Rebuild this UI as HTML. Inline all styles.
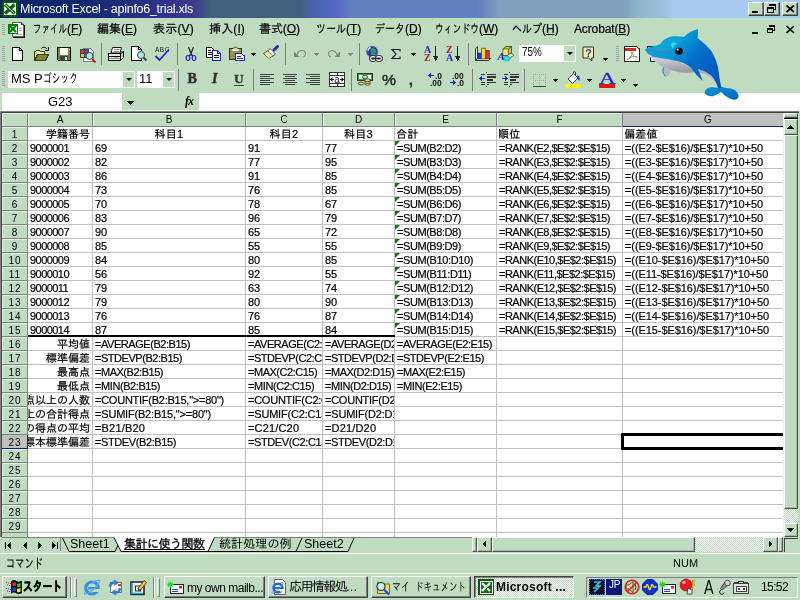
<!DOCTYPE html><html lang="ja"><head><meta charset="utf-8"><title>Microsoft Excel - apinfo6_trial.xls</title><style>
html,body{margin:0;padding:0;}
body{width:800px;height:600px;overflow:hidden;background:#c0dcc0;position:relative;will-change:transform;
 font-family:"Liberation Sans","IPAGothic",sans-serif;font-size:12px;color:#000;}
.a{position:absolute;}
.t{position:absolute;white-space:nowrap;line-height:1;}
.j{font-family:"Liberation Sans","IPAGothic",sans-serif;}
#title{left:0;top:0;width:800px;height:18px;background:linear-gradient(90deg,#0a246a 0,#0c2670 70px,#1c2c78 110px,#30348a 170px,#3c3c8c 196px,#406080 210px,#406080 300px,#4862b0 315px,#5866c4 335px,#6080c0 352px,#6080c0 478px,#7090c0 490px,#80a0c0 500px,#80a0c0 626px,#8cb0cc 634px,#94bcd4 650px,#9ac2dc 664px,#a6caf0 673px,#a6caf0 800px);}
.wb{position:absolute;top:2px;width:16px;height:14px;background:#c0dcc0;box-sizing:border-box;border:1px solid;border-color:#fff #404040 #404040 #fff;box-shadow:inset -1px -1px 0 #808080;}
.hl{position:absolute;background:#c0c0c0;height:1px;}
.vl{position:absolute;background:#c0c0c0;width:1px;}
.c{position:absolute;white-space:nowrap;overflow:hidden;font-size:11px;line-height:14px;height:13px;-webkit-text-stroke:0.2px #000;}
.cj{font-size:11px;letter-spacing:0.3px;}
.rh{position:absolute;left:2px;width:25px;height:13px;box-shadow:inset 1px 1px 0 #e4f2e4;text-align:center;font-size:10px;line-height:15px;letter-spacing:1px;text-indent:1px;}
.ch{position:absolute;top:113px;height:13px;box-shadow:inset 1px 1px 0 #e4f2e4;text-align:center;font-size:10px;line-height:13px;}
.sep{position:absolute;width:2px;height:20px;border-left:1px solid #808080;border-right:1px solid #fff;box-sizing:border-box;}
.grip{position:absolute;width:3px;height:18px;background:repeating-linear-gradient(180deg,#8aa08a 0,#8aa08a 1px,#e8f4e8 1px,#e8f4e8 2px);}
.dd{position:absolute;width:0;height:0;border-left:3px solid transparent;border-right:3px solid transparent;border-top:3px solid #000;}
.btn3d{position:absolute;box-sizing:border-box;background:#c0dcc0;border:1px solid;border-color:#fff #505050 #505050 #fff;box-shadow:inset -1px -1px 0 #a0b8a0;}
.tb{position:absolute;top:577px;height:21px;box-sizing:border-box;background:#c0dcc0;border:1px solid;border-color:#fff #404040 #404040 #fff;box-shadow:inset -1px -1px 0 #808080;}
.dither{background-image:conic-gradient(#fff 25%,#c0dcc0 0 50%,#fff 0 75%,#c0dcc0 0);background-size:2px 2px;}
svg{position:absolute;overflow:visible;}
</style></head><body>
<div id="title" class="a"></div>
<div class="t" id="ttl" style="left:20px;top:3px;font-size:12.5px;letter-spacing:-0.277px;color:#fff;">Microsoft Excel - apinfo6_trial.xls</div>
<div class="wb" style="left:748px"></div>
<div class="wb" style="left:764px"></div>
<div class="wb" style="left:782px"></div>
<svg style="left:2px;top:1px" width="16" height="16" viewBox="0 0 16 16" shape-rendering="crispEdges"><rect x="0" y="0" width="16" height="16" fill="#005c00"/><rect x="2" y="2" width="12" height="12" fill="#fff"/><path d="M3 3.500L12.500 12.500M12.500 3.500L3 12.500" stroke="#006800" stroke-width="3.400" fill="none" shape-rendering="auto"/><path d="M3.500 4L12 12" stroke="#fff" stroke-width="0.900" shape-rendering="auto"/></svg><svg style="left:748px;top:2px" width="16" height="14" viewBox="0 0 16 14" shape-rendering="crispEdges"><rect x="4" y="9" width="6" height="2" fill="#000"/></svg><svg style="left:764px;top:2px" width="16" height="14" viewBox="0 0 16 14" shape-rendering="crispEdges"><path d="M5.500 2.500h6v5h-2" fill="none" stroke="#000"/><rect x="5" y="2" width="7" height="2" fill="#000"/><rect x="3.500" y="5.500" width="6" height="5" fill="none" stroke="#000"/><rect x="3" y="5" width="7" height="2" fill="#000"/></svg><svg style="left:782px;top:2px" width="16" height="14" viewBox="0 0 16 14" shape-rendering="crispEdges"><path d="M4.500 3.500L12 10M12 3.500L4.500 10" stroke="#000" stroke-width="1.700" shape-rendering="auto"/></svg>
<div class="t" id="m33" style="left:33px;top:23px;font-size:12px;-webkit-text-stroke:0.200px #000;"><span style="display:inline-block;width:34px;height:12px;vertical-align:top"><span style="display:inline-block;transform:scaleX(0.7083);transform-origin:0 0;white-space:nowrap">ファイル</span></span>(<u>F</u>)</div>
<div class="t" id="m97" style="left:97px;top:23px;font-size:12px;letter-spacing:-0.003px;-webkit-text-stroke:0.200px #000;">編集(<u>E</u>)</div>
<div class="t" id="m153" style="left:153px;top:23px;font-size:12px;letter-spacing:0.197px;-webkit-text-stroke:0.200px #000;">表示(<u>V</u>)</div>
<div class="t" id="m209" style="left:209px;top:23px;font-size:12px;letter-spacing:0.131px;-webkit-text-stroke:0.200px #000;">挿入(<u>I</u>)</div>
<div class="t" id="m259" style="left:259px;top:23px;font-size:12px;letter-spacing:-0.069px;-webkit-text-stroke:0.200px #000;">書式(<u>O</u>)</div>
<div class="t" id="m316" style="left:316px;top:23px;font-size:12px;-webkit-text-stroke:0.200px #000;"><span style="display:inline-block;width:30px;height:12px;vertical-align:top"><span style="display:inline-block;transform:scaleX(0.8333);transform-origin:0 0;white-space:nowrap">ツール</span></span>(<u>T</u>)</div>
<div class="t" id="m375" style="left:375px;top:23px;font-size:12px;-webkit-text-stroke:0.200px #000;"><span style="display:inline-block;width:30px;height:12px;vertical-align:top"><span style="display:inline-block;transform:scaleX(0.8333);transform-origin:0 0;white-space:nowrap">データ</span></span>(<u>D</u>)</div>
<div class="t" id="m435" style="left:435px;top:23px;font-size:12px;-webkit-text-stroke:0.200px #000;"><span style="display:inline-block;width:44px;height:12px;vertical-align:top"><span style="display:inline-block;transform:scaleX(0.7333);transform-origin:0 0;white-space:nowrap">ウィンドウ</span></span>(<u>W</u>)</div>
<div class="t" id="m512" style="left:512px;top:23px;font-size:12px;-webkit-text-stroke:0.200px #000;"><span style="display:inline-block;width:30px;height:12px;vertical-align:top"><span style="display:inline-block;transform:scaleX(0.8333);transform-origin:0 0;white-space:nowrap">ヘルプ</span></span>(<u>H</u>)</div>
<div class="t" id="m574" style="left:574px;top:23px;font-size:12px;letter-spacing:-0.136px;-webkit-text-stroke:0.200px #000;">Acrobat(<u>B</u>)</div>
<div class="a" style="left:2px;top:24px;width:3px;height:12px;background:repeating-linear-gradient(180deg,#a0a0a4 0,#a0a0a4 1px,transparent 1px,transparent 2px)"></div>
<svg style="left:8px;top:21px" width="17" height="17" viewBox="0 0 17 17" shape-rendering="crispEdges"><path d="M4.500 1.500H13.500L15.500 3.500V15.500H4.500Z" fill="#fff" stroke="#606060"/><path d="M16 4V16H5" fill="none" stroke="#101010" stroke-width="1"/><path d="M13.500 1.500V3.500H15.500" fill="none" stroke="#404040"/><path d="M11 7.500H14M11 9.500H14M8 13.500H14" stroke="#b0b0b0"/><rect x="0" y="3" width="10" height="10" fill="#008000"/><rect x="1.500" y="4.500" width="7" height="7" fill="#e8f8e8"/><path d="M2 5L8 11M8 5L2 11" stroke="#008000" stroke-width="2.200" shape-rendering="auto"/></svg><svg style="left:749px;top:24px" width="12" height="12" viewBox="0 0 12 12" shape-rendering="crispEdges"><rect x="3" y="8" width="6" height="2" fill="#000"/></svg><svg style="left:765px;top:24px" width="12" height="12" viewBox="0 0 12 12" shape-rendering="crispEdges"><path d="M4.5 1.5h5v5h-2" fill="none" stroke="#000"/><rect x="4" y="1" width="6" height="2" fill="#000"/><rect x="2.500" y="4.500" width="5" height="4" fill="none" stroke="#000"/><rect x="2" y="4" width="6" height="2" fill="#000"/></svg><svg style="left:785px;top:24px" width="12" height="12" viewBox="0 0 12 12" shape-rendering="crispEdges"><path d="M1.500 2L9 9M9 2L1.500 9" stroke="#000" stroke-width="1.700" shape-rendering="auto"/></svg>
<div class="a" style="left:2px;top:46px;width:3px;height:16px;background:repeating-linear-gradient(180deg,#a0a0a4 0,#a0a0a4 1px,transparent 1px,transparent 2px)"></div><svg style="left:12px;top:47px" width="12" height="14" viewBox="0 0 12 14" shape-rendering="crispEdges"><path d="M0.500 0.500H7.500L10.500 3.500V13.500H0.500Z" fill="#fff" stroke="#000"/><path d="M7.500 0.500V3.500H10.500" fill="none" stroke="#000"/></svg><svg style="left:33px;top:46px" width="17" height="15" viewBox="0 0 17 15" shape-rendering="crispEdges"><path d="M1.500 14V5.500H2.500L3.500 4.500H6.500L7.500 5.500H11.500V8" fill="#e8e8a0" stroke="#404000"/><path d="M1.500 14.500L4.500 8.500H15.500L12.500 14.500Z" fill="#808040" stroke="#404000"/><path d="M8.500 2.500Q11 -0.500 14 3" fill="none" stroke="#000" shape-rendering="auto"/><path d="M15.500 1V4.500H12" fill="none" stroke="#000"/></svg><svg style="left:57px;top:47px" width="15" height="14" viewBox="0 0 15 14" shape-rendering="crispEdges"><path d="M0.500 0.500H13.500V13.500H1.500L0.500 12.500Z" fill="#808040" stroke="#000"/><rect x="3" y="1" width="8" height="7" fill="#fff"/><rect x="11.500" y="1.500" width="1" height="1" fill="#fff"/><rect x="3" y="9" width="8" height="4.500" fill="#404040"/><rect x="8" y="10" width="2" height="3" fill="#fff"/></svg><svg style="left:80px;top:47px" width="17" height="16" viewBox="0 0 17 16" shape-rendering="crispEdges"><path d="M3.500 1.500H10.500L13.500 4.500V14.500H3.500Z" fill="#fff" stroke="#808080"/><rect x="0" y="2" width="9" height="9" fill="#404040"/><rect x="1" y="3" width="3" height="3" fill="#e03030"/><rect x="5" y="3" width="3" height="3" fill="#3050d0"/><rect x="1" y="7" width="3" height="3" fill="#e0d020"/><rect x="5" y="7" width="3" height="3" fill="#30a030"/><circle cx="9.500" cy="9" r="3.500" fill="#a0f0f0" stroke="#404040" shape-rendering="auto"/><path d="M12 12L15.500 15.500" stroke="#d02020" stroke-width="2" shape-rendering="auto"/></svg><div class="a" style="left:101px;top:43px;width:1px;height:22px;background:#808080"></div><svg style="left:108px;top:46px" width="17" height="16" viewBox="0 0 17 16"><path d="M2.500 8L4.500 6H15.500L13 8Z" fill="#e8f0e8" stroke="#000" stroke-width="0.800"/><path d="M3 7L4.500 1.500H13.500L12 7Z" fill="#fff" stroke="#000" stroke-width="0.900"/><path d="M6 3.500H11.500M5.500 5.500H11" stroke="#808080" stroke-width="0.900"/><path d="M12.500 8L15.500 5.500V11.500L12.500 14.500Z" fill="#c8c8c8" stroke="#000" stroke-width="0.900"/><rect x="0.500" y="7.500" width="12" height="7" fill="#e4ece4" stroke="#000" stroke-width="1" shape-rendering="crispEdges"/><rect x="1" y="10" width="11" height="1" fill="#000" shape-rendering="crispEdges"/><rect x="7" y="11" width="3" height="1" fill="#e0c020" shape-rendering="crispEdges"/><rect x="1" y="12" width="11" height="1" fill="#909090" shape-rendering="crispEdges"/></svg><svg style="left:131px;top:46px" width="17" height="16" viewBox="0 0 17 16" shape-rendering="crispEdges"><path d="M0.500 0.500H7.500L10.500 3.500V14.500H0.500Z" fill="#fff" stroke="#000"/><path d="M7.500 0.500V3.500H10.500" fill="none" stroke="#000"/><circle cx="10" cy="9" r="3.500" fill="#a0f0f0" stroke="#404040" shape-rendering="auto"/><path d="M12.500 11.500L15.500 14.500" stroke="#404040" stroke-width="2" shape-rendering="auto"/></svg><div class="t" style="left:155px;top:46.500px;font-size:6.500px;letter-spacing:0.500px;color:#202020">ABC</div><svg style="left:154px;top:47px" width="17" height="15" viewBox="0 0 17 15"><path d="M1.500 9L5.500 13L15 2.500" fill="none" stroke="#2828c0" stroke-width="1.800"/></svg><div class="a" style="left:177px;top:43px;width:1px;height:22px;background:#808080"></div><svg style="left:185px;top:46px" width="12" height="16" viewBox="0 0 12 16"><path d="M3.500 1L6.800 9.500M8.500 1L5.200 9.500" stroke="#202020" stroke-width="1.200" fill="none"/><ellipse cx="3" cy="12" rx="1.800" ry="2.500" fill="none" stroke="#2828c0" stroke-width="1.200"/><ellipse cx="9" cy="12" rx="1.800" ry="2.500" fill="none" stroke="#2828c0" stroke-width="1.200"/><path d="M4 10L5.500 8.500M8 10L6.500 8.500" stroke="#2828c0" stroke-width="1.200"/></svg><svg style="left:206px;top:47px" width="16" height="14" viewBox="0 0 16 14" shape-rendering="crispEdges"><path d="M0.500 0.500H5.500L8.500 3.500V10.500H0.500Z" fill="#fff" stroke="#000"/><path d="M2 3.500H5M2 5.500H7M2 7.500H7" stroke="#000"/><path d="M6.500 3.500H11.500L14.500 6.500V13.500H6.500Z" fill="#fff" stroke="#2020c0"/><path d="M11.500 3.500V6.500H14.500" fill="none" stroke="#2020c0"/><path d="M8 8.500H13M8 10.500H13" stroke="#000"/></svg><svg style="left:229px;top:47px" width="17" height="14" viewBox="0 0 17 14" shape-rendering="crispEdges"><rect x="0.500" y="1.500" width="12" height="11" fill="#908f60" stroke="#303030"/><path d="M4 2.500V1.500L5.500 0H7.500L9 1.500V2.500Z" fill="#e8d860" stroke="#303030" stroke-width="0.800" shape-rendering="auto"/><rect x="3" y="2" width="7" height="1.500" fill="#e8e8c0"/><path d="M6.500 6.500H12.500L15.500 9V13.500H6.500Z" fill="#fff" stroke="#2020c0"/><path d="M8 9.500H12M8 11.500H14" stroke="#2020c0"/></svg><svg style="left:251px;top:53px" width="5" height="3" viewBox="0 0 5 3" shape-rendering="crispEdges"><path d="M0 0h5v1h-5zM1 1h3v1h-3zM2 2h1v1h-1z" fill="#000"/></svg><svg style="left:262px;top:46px" width="18" height="16" viewBox="0 0 18 16"><path d="M12 4L15.500 0.500" stroke="#2828a0" stroke-width="3" stroke-linecap="round"/><path d="M8 2.500L13.500 8L11 10L5.500 5Z" fill="#fff" stroke="#303030" stroke-width="0.800"/><path d="M5.500 5L11 10L7 12.500L1.500 7.500Z" fill="#f0e870" stroke="#303030" stroke-width="0.800"/><path d="M3.500 8.500L7.500 12M5 7L9.500 11M6.500 6L10.500 10" stroke="#fff" stroke-width="0.800"/><path d="M1 14.500H6" stroke="#e0e040" stroke-width="1" stroke-dasharray="1 1"/><path d="M6 14L7 12.500" stroke="#e0e040" stroke-width="1"/></svg><div class="a" style="left:285px;top:43px;width:1px;height:22px;background:#808080"></div><svg style="left:293px;top:49px" width="14" height="9" viewBox="0 0 14 9"><path d="M1 2.500V8H6.500Z" fill="#808080"/><path d="M4 5.500Q6 1 9.500 1.500Q13.500 2.500 12 6.500Q11.500 7.500 10 8" fill="none" stroke="#808080" stroke-width="1.100"/></svg><svg style="left:314px;top:53px" width="5" height="3" viewBox="0 0 5 3" shape-rendering="crispEdges"><path d="M0 0h5v1h-5zM1 1h3v1h-3zM2 2h1v1h-1z" fill="#808080"/></svg><svg style="left:327px;top:49px" width="14" height="9" viewBox="0 0 14 9"><path d="M13 2.500V8H7.500Z" fill="#808080"/><path d="M10 5.500Q8 1 4.500 1.500Q0.500 2.500 2 6.500Q2.500 7.500 4 8" fill="none" stroke="#808080" stroke-width="1.100"/></svg><svg style="left:348px;top:53px" width="5" height="3" viewBox="0 0 5 3" shape-rendering="crispEdges"><path d="M0 0h5v1h-5zM1 1h3v1h-3zM2 2h1v1h-1z" fill="#808080"/></svg><div class="a" style="left:359px;top:43px;width:1px;height:22px;background:#808080"></div><svg style="left:366px;top:46px" width="18" height="17" viewBox="0 0 18 17"><circle cx="6.200" cy="5.800" r="5.600" fill="#2838d0" stroke="#707070" stroke-width="0.900"/><path d="M5 3Q7 1.500 8.500 3Q11 4.500 10 7Q11 8.500 9.500 10.500Q6.500 11 5.500 9Q4 7.500 5.500 6Q4 5 5 3Z" fill="#30a040"/><path d="M1.800 4.500Q2.500 2.500 4.500 1.500" stroke="#f0f8ff" stroke-width="1.400" fill="none"/><path d="M8.500 6L10 8.500" stroke="#2838d0" stroke-width="1"/><rect x="3.500" y="9.500" width="7" height="6" rx="2.800" fill="#fff" stroke="#101010" stroke-width="1"/><rect x="9.500" y="9.500" width="7" height="6" rx="2.800" fill="#fff" stroke="#101010" stroke-width="1"/><rect x="5.500" y="11.500" width="3" height="2" fill="#101010"/><rect x="11.500" y="11.500" width="3" height="2" fill="#101010"/><rect x="8" y="12" width="4" height="1" fill="#101010"/></svg><svg style="left:391px;top:49px" width="11" height="10" viewBox="0 0 11 10"><path d="M9 2.500V0.500H1L5 5L1 9.500H9V7.500" fill="none" stroke="#202020" stroke-width="1.200"/></svg><svg style="left:411px;top:53px" width="5" height="3" viewBox="0 0 5 3" shape-rendering="crispEdges"><path d="M0 0h5v1h-5zM1 1h3v1h-3zM2 2h1v1h-1z" fill="#000"/></svg><div class="t" style="left:424px;top:45px;font-size:10px;font-weight:bold;font-family:'Liberation Serif',serif;color:#2828c0">A</div><div class="t" style="left:424px;top:53px;font-size:10px;font-weight:bold;font-family:'Liberation Serif',serif;color:#a02020">Z</div><svg style="left:433px;top:46px" width="6" height="16" viewBox="0 0 6 16" shape-rendering="crispEdges"><rect x="2" y="0" width="1" height="13" fill="#202020"/><path d="M0 10h5v1h-5zM0.500 11h4v1h-4zM1 12h3v1h-3zM1.500 13h2v1h-2zM2 14h1v1h-1z" fill="#202020"/></svg><div class="t" style="left:446px;top:45px;font-size:10px;font-weight:bold;font-family:'Liberation Serif',serif;color:#a02020">Z</div><div class="t" style="left:446px;top:53px;font-size:10px;font-weight:bold;font-family:'Liberation Serif',serif;color:#2828c0">A</div><svg style="left:455px;top:46px" width="6" height="16" viewBox="0 0 6 16" shape-rendering="crispEdges"><rect x="2" y="0" width="1" height="13" fill="#202020"/><path d="M0 10h5v1h-5zM0.500 11h4v1h-4zM1 12h3v1h-3zM1.500 13h2v1h-2zM2 14h1v1h-1z" fill="#202020"/></svg><div class="a" style="left:468px;top:43px;width:1px;height:22px;background:#808080"></div><svg style="left:475px;top:46px" width="17" height="16" viewBox="0 0 17 16"><path d="M0.500 3L2.500 0.500V12L0.500 14.500Z" fill="#fff" stroke="#202020" stroke-width="0.900"/><path d="M0.500 14.500L2.500 12.500H15.500L13.500 14.500Z" fill="#fff" stroke="#202020" stroke-width="0.900"/><rect x="3" y="7" width="3.200" height="6" fill="#2838c8" stroke="#202050" stroke-width="0.500"/><rect x="6.700" y="2.200" width="3.600" height="10.800" fill="#f0e030" stroke="#404020" stroke-width="0.700"/><rect x="11" y="4.300" width="3.500" height="8.700" fill="#e03030" stroke="#502020" stroke-width="0.500"/></svg><svg style="left:497px;top:45px" width="18" height="18" viewBox="0 0 18 18"><path d="M6 4L9 1.500H14.500V8L11.500 10.500H6Z" fill="#d8c830" stroke="#303030" stroke-width="0.800"/><path d="M6 4H11.500V10.500M11.500 4L14.500 1.500" fill="none" stroke="#303030" stroke-width="0.800"/><rect x="6.400" y="4.400" width="4.700" height="5.700" fill="#f0e860"/><text x="0.500" y="14.500" font-family="Liberation Serif,serif" font-weight="bold" font-style="italic" font-size="11" fill="#2828a8">A</text><path d="M8 12.500L13 8.500Q16 8 16.500 10.500L11.500 14.500Z" fill="#e8e8e8" stroke="#404040" stroke-width="0.800"/><ellipse cx="9.800" cy="13.500" rx="2.800" ry="2.500" fill="#20e8f0" stroke="#2090a0" stroke-width="0.600"/></svg><svg style="left:582px;top:46px" width="14" height="17" viewBox="0 0 14 17"><path d="M1 1H11.500V12H9.500L10 15L6.500 12H1Z" fill="#f4f0a0" stroke="#303030" stroke-width="1"/><text x="3.200" y="10.500" font-family="Liberation Sans,sans-serif" font-weight="bold" font-size="10.500" fill="#2828c0">?</text></svg><svg style="left:603px;top:58px" width="5" height="3" viewBox="0 0 5 3" shape-rendering="crispEdges"><path d="M0 0h5v1h-5zM1 1h3v1h-3zM2 2h1v1h-1z" fill="#000"/></svg><div class="a" style="left:616px;top:46px;width:3px;height:16px;background:repeating-linear-gradient(180deg,#a0a0a4 0,#a0a0a4 1px,transparent 1px,transparent 2px)"></div><svg style="left:624px;top:46px" width="17" height="16" viewBox="0 0 17 16"><path d="M0.500 0.500H12.500L15.500 3V15.500H0.500Z" fill="#fcfcf4" stroke="#202020" shape-rendering="crispEdges"/><rect x="1" y="2" width="11" height="3" fill="#e02828" shape-rendering="crispEdges"/><path d="M13 0.500L15.500 3" stroke="#e02828"/><path d="M8 6Q8.500 9 6 12Q4 14 3 13.500M8 6Q8 10 13.500 11.500M5 11.500Q9 10 13 11" fill="none" stroke="#909090" stroke-width="1"/></svg><svg style="left:647px;top:46px" width="17" height="17" viewBox="0 0 17 17" shape-rendering="crispEdges"><path d="M0.500 4V0.500H12.500" fill="none" stroke="#202020"/><rect x="1" y="1" width="12" height="3" fill="#fcfcf4"/><rect x="3.500" y="10.500" width="11" height="5" fill="#fcfcf4" stroke="#202020"/></svg>
<div class="a" style="left:2px;top:71px;width:3px;height:16px;background:repeating-linear-gradient(180deg,#a0a0a4 0,#a0a0a4 1px,transparent 1px,transparent 2px)"></div><div class="a" style="left:178px;top:69px;width:1px;height:22px;background:#808080"></div><div class="t" style="left:187.500px;top:72px;font-size:14px;font-weight:bold;font-family:'Liberation Serif',serif;color:#303030;-webkit-text-stroke:0.500px #303030">B</div><div class="t" style="left:212px;top:72px;font-size:14px;font-weight:bold;font-style:italic;font-family:'Liberation Serif',serif;color:#303030;-webkit-text-stroke:0.500px #303030">I</div><div class="t" style="left:234px;top:72px;font-size:13.500px;font-weight:bold;font-family:'Liberation Serif',serif;color:#303030;-webkit-text-stroke:0.300px #303030">U</div><div class="a" style="left:234px;top:85px;width:10px;height:1px;background:#404040"></div><div class="a" style="left:253px;top:69px;width:1px;height:22px;background:#808080"></div><svg style="left:260px;top:74px" width="14" height="12" viewBox="0 0 14 12" shape-rendering="crispEdges"><rect x="0" y="0" width="14" height="1" fill="#404040"/><rect x="0" y="2" width="10" height="1" fill="#404040"/><rect x="0" y="4" width="14" height="1" fill="#404040"/><rect x="0" y="6" width="10" height="1" fill="#404040"/><rect x="0" y="8" width="14" height="1" fill="#404040"/><rect x="0" y="10" width="10" height="1" fill="#404040"/></svg><svg style="left:283px;top:74px" width="14" height="12" viewBox="0 0 14 12" shape-rendering="crispEdges"><rect x="0" y="0" width="14" height="1" fill="#404040"/><rect x="2" y="2" width="10" height="1" fill="#404040"/><rect x="0" y="4" width="14" height="1" fill="#404040"/><rect x="2" y="6" width="10" height="1" fill="#404040"/><rect x="0" y="8" width="14" height="1" fill="#404040"/><rect x="2" y="10" width="10" height="1" fill="#404040"/></svg><svg style="left:306px;top:74px" width="14" height="12" viewBox="0 0 14 12" shape-rendering="crispEdges"><rect x="0" y="0" width="14" height="1" fill="#404040"/><rect x="4" y="2" width="10" height="1" fill="#404040"/><rect x="0" y="4" width="14" height="1" fill="#404040"/><rect x="4" y="6" width="10" height="1" fill="#404040"/><rect x="0" y="8" width="14" height="1" fill="#404040"/><rect x="4" y="10" width="10" height="1" fill="#404040"/></svg><svg style="left:329px;top:72px" width="16" height="15" viewBox="0 0 16 15" shape-rendering="crispEdges"><rect x="0.500" y="0.500" width="15" height="14" fill="#fff" stroke="#303030"/><path d="M0 3.500H16M0 11.500H16M8 0V3.500M8 11.500V15" stroke="#303030" fill="none"/><path d="M1 7.500H5M11 7.500H15" stroke="#202020"/><path d="M1 7.500L3.500 5V10ZM15 7.500L12.500 5V10Z" fill="#202020" shape-rendering="auto"/><text x="5.300" y="11" font-family="Liberation Sans,sans-serif" font-size="10" fill="#202020" shape-rendering="auto">a</text></svg><div class="a" style="left:351px;top:69px;width:1px;height:22px;background:#808080"></div><svg style="left:357px;top:73px" width="17" height="13" viewBox="0 0 17 13"><rect x="0.500" y="0.500" width="15" height="7" fill="#30a040" stroke="#303030" shape-rendering="crispEdges"/><rect x="2" y="2" width="12" height="4" fill="#e8f8e8" shape-rendering="crispEdges"/><ellipse cx="8" cy="4" rx="2.500" ry="1.800" fill="#c0dcc0" stroke="#303030" stroke-width="0.800"/><ellipse cx="4" cy="10.500" rx="2.800" ry="1.400" fill="#f0e060" stroke="#303030" stroke-width="0.800"/><ellipse cx="10.500" cy="10.800" rx="2.800" ry="1.400" fill="#f0e060" stroke="#303030" stroke-width="0.800"/><ellipse cx="10.500" cy="9" rx="2.800" ry="1.400" fill="#f0e060" stroke="#303030" stroke-width="0.800"/><ellipse cx="10.500" cy="7.200" rx="2.800" ry="1.400" fill="#f0e060" stroke="#303030" stroke-width="0.800"/></svg><div class="t" style="left:382px;top:72px;font-size:15px;color:#202020;-webkit-text-stroke:0.400px #202020;transform:scaleX(1.050);transform-origin:0 0">%</div><div class="t" style="left:408.500px;top:71px;font-size:17px;font-weight:bold;color:#303030">,</div><div class="t" style="left:435px;top:72px;font-size:8.500px;color:#101010;font-weight:bold;letter-spacing:0px">.0</div><div class="t" style="left:430px;top:79px;font-size:8.500px;color:#101010;font-weight:bold;letter-spacing:0px">.00</div><svg style="left:428px;top:73px" width="6" height="5" viewBox="0 0 6 5" shape-rendering="crispEdges"><path d="M0 2h6v1h-6zM1 1h2v3h-2zM2 0h1v5h-1z" fill="#2828c0"/></svg><div class="t" style="left:452px;top:72px;font-size:8.500px;color:#101010;font-weight:bold;letter-spacing:0px">.00</div><div class="t" style="left:457px;top:79px;font-size:8.500px;color:#101010;font-weight:bold;letter-spacing:0px">.0</div><svg style="left:450px;top:80px" width="6" height="5" viewBox="0 0 6 5" shape-rendering="crispEdges"><path d="M0 2h6v1h-6zM3 1h2v3h-2zM3 0h1v5h-1z" fill="#2828c0"/></svg><div class="a" style="left:472px;top:69px;width:1px;height:22px;background:#808080"></div><svg style="left:479px;top:72px" width="18" height="15" viewBox="0 0 18 15" shape-rendering="crispEdges"><rect x="7" y="0" width="1" height="1" fill="#202020"/><rect x="7" y="14" width="1" height="1" fill="#202020"/><rect x="2" y="2" width="4" height="1" fill="#303030"/><rect x="8" y="2" width="9" height="1" fill="#303030"/><rect x="8" y="4" width="9" height="2" fill="#303030"/><rect x="8" y="7" width="6" height="2" fill="#303030"/><rect x="2" y="10" width="4" height="1" fill="#303030"/><rect x="8" y="10" width="9" height="1" fill="#303030"/><rect x="2" y="12" width="4" height="1" fill="#303030"/><rect x="8" y="12" width="2" height="1" fill="#303030"/><path d="M1 6h5v1h-5zM2 4h1v5h-1zM1 5h1v3h-1zM0 6h1v1h-1z" fill="#2828c0"/></svg><svg style="left:502px;top:72px" width="18" height="15" viewBox="0 0 18 15" shape-rendering="crispEdges"><rect x="7" y="0" width="1" height="1" fill="#202020"/><rect x="7" y="14" width="1" height="1" fill="#202020"/><rect x="2" y="2" width="4" height="1" fill="#303030"/><rect x="8" y="2" width="9" height="1" fill="#303030"/><rect x="8" y="4" width="9" height="2" fill="#303030"/><rect x="8" y="7" width="6" height="2" fill="#303030"/><rect x="2" y="10" width="4" height="1" fill="#303030"/><rect x="8" y="10" width="9" height="1" fill="#303030"/><rect x="2" y="12" width="4" height="1" fill="#303030"/><rect x="8" y="12" width="2" height="1" fill="#303030"/><path d="M0 6h5v1h-5zM3 4h1v5h-1zM4 5h1v3h-1zM5 6h1v1h-1z" fill="#2828c0"/></svg><div class="a" style="left:524px;top:69px;width:1px;height:22px;background:#808080"></div><svg style="left:533px;top:74px" width="14" height="13" viewBox="0 0 14 13" shape-rendering="crispEdges"><g fill="#a4a4c0"><rect x="0" y="0" width="1" height="1"/><rect x="0" y="6" width="1" height="1"/><rect x="2" y="0" width="1" height="1"/><rect x="2" y="6" width="1" height="1"/><rect x="4" y="0" width="1" height="1"/><rect x="4" y="6" width="1" height="1"/><rect x="6" y="0" width="1" height="1"/><rect x="6" y="6" width="1" height="1"/><rect x="8" y="0" width="1" height="1"/><rect x="8" y="6" width="1" height="1"/><rect x="10" y="0" width="1" height="1"/><rect x="10" y="6" width="1" height="1"/><rect x="12" y="0" width="1" height="1"/><rect x="12" y="6" width="1" height="1"/><rect x="0" y="0" width="1" height="1"/><rect x="6" y="0" width="1" height="1"/><rect x="12" y="0" width="1" height="1"/><rect x="0" y="2" width="1" height="1"/><rect x="6" y="2" width="1" height="1"/><rect x="12" y="2" width="1" height="1"/><rect x="0" y="4" width="1" height="1"/><rect x="6" y="4" width="1" height="1"/><rect x="12" y="4" width="1" height="1"/><rect x="0" y="6" width="1" height="1"/><rect x="6" y="6" width="1" height="1"/><rect x="12" y="6" width="1" height="1"/><rect x="0" y="8" width="1" height="1"/><rect x="6" y="8" width="1" height="1"/><rect x="12" y="8" width="1" height="1"/><rect x="0" y="10" width="1" height="1"/><rect x="6" y="10" width="1" height="1"/><rect x="12" y="10" width="1" height="1"/></g><rect x="0" y="12" width="13" height="1" fill="#404040"/></svg><svg style="left:553px;top:79px" width="5" height="3" viewBox="0 0 5 3" shape-rendering="crispEdges"><path d="M0 0h5v1h-5zM1 1h3v1h-3zM2 2h1v1h-1z" fill="#000"/></svg><svg style="left:565px;top:71px" width="17" height="17" viewBox="0 0 17 17"><path d="M3 8L8.500 2.500L13 7L7.500 12.500Z" fill="#fff" stroke="#303030" stroke-width="0.900"/><path d="M8.500 2.500V0.800Q9.500 -0.200 10.500 1V4.500" fill="none" stroke="#303030" stroke-width="0.900"/><path d="M12 4Q15.500 5 14.500 10Q13 8 12.500 6.500Z" fill="#2828c0"/><rect x="0" y="13" width="16" height="4" fill="#f8f020" shape-rendering="crispEdges"/></svg><svg style="left:587px;top:79px" width="5" height="3" viewBox="0 0 5 3" shape-rendering="crispEdges"><path d="M0 0h5v1h-5zM1 1h3v1h-3zM2 2h1v1h-1z" fill="#000"/></svg><div class="t" style="left:599px;top:71px;font-size:16px;font-family:'Liberation Serif',serif;color:#2828c0;-webkit-text-stroke:0.300px #2828c0;transform:scaleX(1.450);transform-origin:0 0">A</div><div class="a" style="left:599px;top:84px;width:16px;height:4px;background:#e01818"></div><svg style="left:621px;top:79px" width="5" height="3" viewBox="0 0 5 3" shape-rendering="crispEdges"><path d="M0 0h5v1h-5zM1 1h3v1h-3zM2 2h1v1h-1z" fill="#000"/></svg><svg style="left:633px;top:84px" width="5" height="3" viewBox="0 0 5 3" shape-rendering="crispEdges"><path d="M0 0h5v1h-5zM1 1h3v1h-3zM2 2h1v1h-1z" fill="#000"/></svg>
<div class="a" style="left:8px;top:71px;width:127px;height:17px;background:#fff"></div>
<div class="a" style="left:123px;top:72px;width:11px;height:15px;background:#c0dcc0"></div><div class="dd" style="left:126px;top:78px"></div>
<div class="t" style="left:11px;top:72px;font-size:13px;" id="fontname">MS P<span style="display:inline-block;width:35px;height:13px;vertical-align:top"><span style="display:inline-block;transform:scaleX(0.6731);transform-origin:0 0;white-space:nowrap">ゴシック</span></span></div>
<div class="a" style="left:137px;top:71px;width:38px;height:17px;background:#fff"></div>
<div class="a" style="left:163px;top:72px;width:11px;height:15px;background:#c0dcc0"></div><div class="dd" style="left:166px;top:78px"></div>
<div class="t" style="left:139px;top:72px;font-size:13px;">11</div>
<div class="a" style="left:519px;top:45px;width:57px;height:17px;background:#fff"></div>
<div class="a" style="left:564px;top:46px;width:11px;height:15px;background:#c0dcc0"></div><div class="dd" style="left:567px;top:52px"></div>
<div class="t" style="left:522px;top:46px;font-size:12px;transform:scaleX(0.820);transform-origin:0 0">75%</div>
<div class="a" style="left:2px;top:93px;width:120px;height:17px;background:#fff"></div>
<div class="t" style="left:48px;top:95px;font-size:13px;" id="namebox">G23</div>
<svg style="left:127px;top:101px" width="7" height="4" viewBox="0 0 7 4" shape-rendering="crispEdges"><path d="M0 0h7v1h-7zM1 1h5v1h-5zM2 2h3v1h-3zM3 3h1v1h-1z" fill="#000"/></svg>
<div class="t" style="left:185px;top:95px;font-size:12px;font-family:'Liberation Serif',serif;font-style:italic;font-weight:bold;letter-spacing:-1px">fx</div>
<div class="a" style="left:199px;top:93px;width:601px;height:17px;background:#fff"></div>
<div class="a" style="left:0;top:110px;width:800px;height:1px;background:#f0f8f0"></div>
<div class="a" style="left:0;top:111px;width:799px;height:1px;background:#808080"></div><div class="a" style="left:1px;top:112px;width:798px;height:1px;background:#404040"></div>
<div class="a" style="left:0;top:111px;width:1px;height:441px;background:#808080"></div><div class="a" style="left:1px;top:112px;width:1px;height:440px;background:#404040"></div>
<div class="a" style="left:28px;top:127px;width:755px;height:410px;background:#fff"></div>
<div class="a" style="left:623px;top:113px;width:160px;height:13px;background:#c0c0c0"></div>
<div class="a" style="left:623px;top:126px;width:160px;height:1px;background:#0a246a"></div>
<div class="a" style="left:2px;top:435px;width:25px;height:13px;background:#c0c0c0"></div>
<div class="a" style="left:2px;top:126px;width:621px;height:1px;background:#808080"></div>
<div class="a" style="left:27px;top:114px;width:1px;height:423px;background:#808080"></div>
<div class="a" style="left:92px;top:113px;width:1px;height:14px;background:#808080"></div>
<div class="vl" style="left:92px;top:127px;height:410px"></div>
<div class="a" style="left:245px;top:113px;width:1px;height:14px;background:#808080"></div>
<div class="vl" style="left:245px;top:127px;height:410px"></div>
<div class="a" style="left:322px;top:113px;width:1px;height:14px;background:#808080"></div>
<div class="vl" style="left:322px;top:127px;height:410px"></div>
<div class="a" style="left:394px;top:113px;width:1px;height:14px;background:#808080"></div>
<div class="vl" style="left:394px;top:127px;height:410px"></div>
<div class="a" style="left:496px;top:113px;width:1px;height:14px;background:#808080"></div>
<div class="vl" style="left:496px;top:127px;height:410px"></div>
<div class="a" style="left:622px;top:113px;width:1px;height:14px;background:#808080"></div>
<div class="vl" style="left:622px;top:127px;height:410px"></div>
<div class="a" style="left:2px;top:140px;width:25px;height:1px;background:#808080"></div>
<div class="hl" style="left:28px;top:140px;width:755px"></div>
<div class="rh" style="top:127px;">1</div>
<div class="a" style="left:2px;top:154px;width:25px;height:1px;background:#808080"></div>
<div class="hl" style="left:28px;top:154px;width:755px"></div>
<div class="rh" style="top:141px;">2</div>
<div class="a" style="left:2px;top:168px;width:25px;height:1px;background:#808080"></div>
<div class="hl" style="left:28px;top:168px;width:755px"></div>
<div class="rh" style="top:155px;">3</div>
<div class="a" style="left:2px;top:182px;width:25px;height:1px;background:#808080"></div>
<div class="hl" style="left:28px;top:182px;width:755px"></div>
<div class="rh" style="top:169px;">4</div>
<div class="a" style="left:2px;top:196px;width:25px;height:1px;background:#808080"></div>
<div class="hl" style="left:28px;top:196px;width:755px"></div>
<div class="rh" style="top:183px;">5</div>
<div class="a" style="left:2px;top:210px;width:25px;height:1px;background:#808080"></div>
<div class="hl" style="left:28px;top:210px;width:755px"></div>
<div class="rh" style="top:197px;">6</div>
<div class="a" style="left:2px;top:224px;width:25px;height:1px;background:#808080"></div>
<div class="hl" style="left:28px;top:224px;width:755px"></div>
<div class="rh" style="top:211px;">7</div>
<div class="a" style="left:2px;top:238px;width:25px;height:1px;background:#808080"></div>
<div class="hl" style="left:28px;top:238px;width:755px"></div>
<div class="rh" style="top:225px;">8</div>
<div class="a" style="left:2px;top:252px;width:25px;height:1px;background:#808080"></div>
<div class="hl" style="left:28px;top:252px;width:755px"></div>
<div class="rh" style="top:239px;">9</div>
<div class="a" style="left:2px;top:266px;width:25px;height:1px;background:#808080"></div>
<div class="hl" style="left:28px;top:266px;width:755px"></div>
<div class="rh" style="top:253px;">10</div>
<div class="a" style="left:2px;top:280px;width:25px;height:1px;background:#808080"></div>
<div class="hl" style="left:28px;top:280px;width:755px"></div>
<div class="rh" style="top:267px;">11</div>
<div class="a" style="left:2px;top:294px;width:25px;height:1px;background:#808080"></div>
<div class="hl" style="left:28px;top:294px;width:755px"></div>
<div class="rh" style="top:281px;">12</div>
<div class="a" style="left:2px;top:308px;width:25px;height:1px;background:#808080"></div>
<div class="hl" style="left:28px;top:308px;width:755px"></div>
<div class="rh" style="top:295px;">13</div>
<div class="a" style="left:2px;top:322px;width:25px;height:1px;background:#808080"></div>
<div class="hl" style="left:28px;top:322px;width:755px"></div>
<div class="rh" style="top:309px;">14</div>
<div class="a" style="left:2px;top:336px;width:25px;height:1px;background:#808080"></div>
<div class="hl" style="left:28px;top:336px;width:755px"></div>
<div class="rh" style="top:323px;">15</div>
<div class="a" style="left:2px;top:350px;width:25px;height:1px;background:#808080"></div>
<div class="hl" style="left:28px;top:350px;width:755px"></div>
<div class="rh" style="top:337px;">16</div>
<div class="a" style="left:2px;top:364px;width:25px;height:1px;background:#808080"></div>
<div class="hl" style="left:28px;top:364px;width:755px"></div>
<div class="rh" style="top:351px;">17</div>
<div class="a" style="left:2px;top:378px;width:25px;height:1px;background:#808080"></div>
<div class="hl" style="left:28px;top:378px;width:755px"></div>
<div class="rh" style="top:365px;">18</div>
<div class="a" style="left:2px;top:392px;width:25px;height:1px;background:#808080"></div>
<div class="hl" style="left:28px;top:392px;width:755px"></div>
<div class="rh" style="top:379px;">19</div>
<div class="a" style="left:2px;top:406px;width:25px;height:1px;background:#808080"></div>
<div class="hl" style="left:28px;top:406px;width:755px"></div>
<div class="rh" style="top:393px;">20</div>
<div class="a" style="left:2px;top:420px;width:25px;height:1px;background:#808080"></div>
<div class="hl" style="left:28px;top:420px;width:755px"></div>
<div class="rh" style="top:407px;">21</div>
<div class="a" style="left:2px;top:434px;width:25px;height:1px;background:#808080"></div>
<div class="hl" style="left:28px;top:434px;width:755px"></div>
<div class="rh" style="top:421px;">22</div>
<div class="a" style="left:2px;top:448px;width:25px;height:1px;background:#808080"></div>
<div class="hl" style="left:28px;top:448px;width:755px"></div>
<div class="rh" style="top:435px;box-shadow:none;">23</div>
<div class="a" style="left:2px;top:462px;width:25px;height:1px;background:#808080"></div>
<div class="hl" style="left:28px;top:462px;width:755px"></div>
<div class="rh" style="top:449px;">24</div>
<div class="a" style="left:2px;top:476px;width:25px;height:1px;background:#808080"></div>
<div class="hl" style="left:28px;top:476px;width:755px"></div>
<div class="rh" style="top:463px;">25</div>
<div class="a" style="left:2px;top:490px;width:25px;height:1px;background:#808080"></div>
<div class="hl" style="left:28px;top:490px;width:755px"></div>
<div class="rh" style="top:477px;">26</div>
<div class="a" style="left:2px;top:504px;width:25px;height:1px;background:#808080"></div>
<div class="hl" style="left:28px;top:504px;width:755px"></div>
<div class="rh" style="top:491px;">27</div>
<div class="a" style="left:2px;top:518px;width:25px;height:1px;background:#808080"></div>
<div class="hl" style="left:28px;top:518px;width:755px"></div>
<div class="rh" style="top:505px;">28</div>
<div class="a" style="left:2px;top:532px;width:25px;height:1px;background:#808080"></div>
<div class="hl" style="left:28px;top:532px;width:755px"></div>
<div class="rh" style="top:519px;">29</div>
<div class="a" style="left:27px;top:435px;width:1px;height:14px;background:#0a246a"></div><div class="a" style="left:2px;top:448px;width:26px;height:1px;background:#0a246a"></div>
<div class="ch" style="left:2px;width:25px"></div>
<div class="ch" style="left:28px;width:64px;">A</div>
<div class="ch" style="left:93px;width:152px;">B</div>
<div class="ch" style="left:246px;width:76px;">C</div>
<div class="ch" style="left:323px;width:71px;">D</div>
<div class="ch" style="left:395px;width:101px;">E</div>
<div class="ch" style="left:497px;width:125px;">F</div>
<div class="ch" style="left:623px;width:170px;box-shadow:none;">G</div>
<div class="c cj" id="cA1" style="left:28px;width:62px;display:flex;justify-content:flex-end;top:127px;letter-spacing:0px"><span>学籍番号</span></div>
<div class="c cj" id="cB1" style="left:93px;width:152px;text-align:center;top:127px;">科目1</div>
<div class="c cj" id="cC1" style="left:246px;width:76px;text-align:center;top:127px;">科目2</div>
<div class="c cj" id="cD1" style="left:323px;width:71px;text-align:center;top:127px;">科目3</div>
<div class="c cj" id="cE1" style="left:397px;width:99px;text-align:left;top:127px;text-indent:-1px;">合計</div>
<div class="c cj" id="cF1" style="left:499px;width:123px;text-align:left;top:127px;text-indent:-1px;">順位</div>
<div class="c cj" id="cG1" style="left:625px;width:158px;text-align:left;top:127px;text-indent:-1px;">偏差値</div>
<div class="c " id="cA2" style="left:30px;width:62px;text-align:left;top:141px;letter-spacing:-0.547px;">9000001</div>
<div class="c " id="cB2" style="left:95px;width:150px;text-align:left;top:141px;letter-spacing:-0.124px;">69</div>
<div class="c " id="cC2" style="left:248px;width:74px;text-align:left;top:141px;letter-spacing:-0.124px;">91</div>
<div class="c " id="cD2" style="left:325px;width:69px;text-align:left;top:141px;letter-spacing:-0.124px;">77</div>
<div class="c " id="cE2" style="left:397px;width:99px;text-align:left;top:141px;letter-spacing:-0.434px;">=SUM(B2:D2)</div>
<div class="c " id="cF2" style="left:499px;width:123px;text-align:left;top:141px;letter-spacing:-0.519px;">=RANK(E2,$E$2:$E$15)</div>
<div class="c " id="cG2" style="left:625px;width:158px;text-align:left;top:141px;letter-spacing:-0.082px;">=((E2-$E$16)/$E$17)*10+50</div>
<svg style="left:395px;top:141px" width="5" height="5"><path d="M0 0H5L0 5Z" fill="#008000"/></svg>
<div class="c " id="cA3" style="left:30px;width:62px;text-align:left;top:155px;letter-spacing:-0.547px;">9000002</div>
<div class="c " id="cB3" style="left:95px;width:150px;text-align:left;top:155px;letter-spacing:-0.124px;">82</div>
<div class="c " id="cC3" style="left:248px;width:74px;text-align:left;top:155px;letter-spacing:-0.124px;">77</div>
<div class="c " id="cD3" style="left:325px;width:69px;text-align:left;top:155px;letter-spacing:-0.124px;">95</div>
<div class="c " id="cE3" style="left:397px;width:99px;text-align:left;top:155px;letter-spacing:-0.434px;">=SUM(B3:D3)</div>
<div class="c " id="cF3" style="left:499px;width:123px;text-align:left;top:155px;letter-spacing:-0.519px;">=RANK(E3,$E$2:$E$15)</div>
<div class="c " id="cG3" style="left:625px;width:158px;text-align:left;top:155px;letter-spacing:-0.082px;">=((E3-$E$16)/$E$17)*10+50</div>
<svg style="left:395px;top:155px" width="5" height="5"><path d="M0 0H5L0 5Z" fill="#008000"/></svg>
<div class="c " id="cA4" style="left:30px;width:62px;text-align:left;top:169px;letter-spacing:-0.547px;">9000003</div>
<div class="c " id="cB4" style="left:95px;width:150px;text-align:left;top:169px;letter-spacing:-0.124px;">86</div>
<div class="c " id="cC4" style="left:248px;width:74px;text-align:left;top:169px;letter-spacing:-0.124px;">91</div>
<div class="c " id="cD4" style="left:325px;width:69px;text-align:left;top:169px;letter-spacing:-0.124px;">85</div>
<div class="c " id="cE4" style="left:397px;width:99px;text-align:left;top:169px;letter-spacing:-0.434px;">=SUM(B4:D4)</div>
<div class="c " id="cF4" style="left:499px;width:123px;text-align:left;top:169px;letter-spacing:-0.519px;">=RANK(E4,$E$2:$E$15)</div>
<div class="c " id="cG4" style="left:625px;width:158px;text-align:left;top:169px;letter-spacing:-0.082px;">=((E4-$E$16)/$E$17)*10+50</div>
<svg style="left:395px;top:169px" width="5" height="5"><path d="M0 0H5L0 5Z" fill="#008000"/></svg>
<div class="c " id="cA5" style="left:30px;width:62px;text-align:left;top:183px;letter-spacing:-0.547px;">9000004</div>
<div class="c " id="cB5" style="left:95px;width:150px;text-align:left;top:183px;letter-spacing:-0.124px;">73</div>
<div class="c " id="cC5" style="left:248px;width:74px;text-align:left;top:183px;letter-spacing:-0.124px;">76</div>
<div class="c " id="cD5" style="left:325px;width:69px;text-align:left;top:183px;letter-spacing:-0.124px;">85</div>
<div class="c " id="cE5" style="left:397px;width:99px;text-align:left;top:183px;letter-spacing:-0.434px;">=SUM(B5:D5)</div>
<div class="c " id="cF5" style="left:499px;width:123px;text-align:left;top:183px;letter-spacing:-0.519px;">=RANK(E5,$E$2:$E$15)</div>
<div class="c " id="cG5" style="left:625px;width:158px;text-align:left;top:183px;letter-spacing:-0.082px;">=((E5-$E$16)/$E$17)*10+50</div>
<svg style="left:395px;top:183px" width="5" height="5"><path d="M0 0H5L0 5Z" fill="#008000"/></svg>
<div class="c " id="cA6" style="left:30px;width:62px;text-align:left;top:197px;letter-spacing:-0.547px;">9000005</div>
<div class="c " id="cB6" style="left:95px;width:150px;text-align:left;top:197px;letter-spacing:-0.124px;">70</div>
<div class="c " id="cC6" style="left:248px;width:74px;text-align:left;top:197px;letter-spacing:-0.124px;">78</div>
<div class="c " id="cD6" style="left:325px;width:69px;text-align:left;top:197px;letter-spacing:-0.124px;">67</div>
<div class="c " id="cE6" style="left:397px;width:99px;text-align:left;top:197px;letter-spacing:-0.434px;">=SUM(B6:D6)</div>
<div class="c " id="cF6" style="left:499px;width:123px;text-align:left;top:197px;letter-spacing:-0.519px;">=RANK(E6,$E$2:$E$15)</div>
<div class="c " id="cG6" style="left:625px;width:158px;text-align:left;top:197px;letter-spacing:-0.082px;">=((E6-$E$16)/$E$17)*10+50</div>
<svg style="left:395px;top:197px" width="5" height="5"><path d="M0 0H5L0 5Z" fill="#008000"/></svg>
<div class="c " id="cA7" style="left:30px;width:62px;text-align:left;top:211px;letter-spacing:-0.547px;">9000006</div>
<div class="c " id="cB7" style="left:95px;width:150px;text-align:left;top:211px;letter-spacing:-0.124px;">83</div>
<div class="c " id="cC7" style="left:248px;width:74px;text-align:left;top:211px;letter-spacing:-0.124px;">96</div>
<div class="c " id="cD7" style="left:325px;width:69px;text-align:left;top:211px;letter-spacing:-0.124px;">79</div>
<div class="c " id="cE7" style="left:397px;width:99px;text-align:left;top:211px;letter-spacing:-0.434px;">=SUM(B7:D7)</div>
<div class="c " id="cF7" style="left:499px;width:123px;text-align:left;top:211px;letter-spacing:-0.519px;">=RANK(E7,$E$2:$E$15)</div>
<div class="c " id="cG7" style="left:625px;width:158px;text-align:left;top:211px;letter-spacing:-0.082px;">=((E7-$E$16)/$E$17)*10+50</div>
<svg style="left:395px;top:211px" width="5" height="5"><path d="M0 0H5L0 5Z" fill="#008000"/></svg>
<div class="c " id="cA8" style="left:30px;width:62px;text-align:left;top:225px;letter-spacing:-0.547px;">9000007</div>
<div class="c " id="cB8" style="left:95px;width:150px;text-align:left;top:225px;letter-spacing:-0.124px;">90</div>
<div class="c " id="cC8" style="left:248px;width:74px;text-align:left;top:225px;letter-spacing:-0.124px;">65</div>
<div class="c " id="cD8" style="left:325px;width:69px;text-align:left;top:225px;letter-spacing:-0.124px;">72</div>
<div class="c " id="cE8" style="left:397px;width:99px;text-align:left;top:225px;letter-spacing:-0.434px;">=SUM(B8:D8)</div>
<div class="c " id="cF8" style="left:499px;width:123px;text-align:left;top:225px;letter-spacing:-0.519px;">=RANK(E8,$E$2:$E$15)</div>
<div class="c " id="cG8" style="left:625px;width:158px;text-align:left;top:225px;letter-spacing:-0.082px;">=((E8-$E$16)/$E$17)*10+50</div>
<svg style="left:395px;top:225px" width="5" height="5"><path d="M0 0H5L0 5Z" fill="#008000"/></svg>
<div class="c " id="cA9" style="left:30px;width:62px;text-align:left;top:239px;letter-spacing:-0.547px;">9000008</div>
<div class="c " id="cB9" style="left:95px;width:150px;text-align:left;top:239px;letter-spacing:-0.124px;">85</div>
<div class="c " id="cC9" style="left:248px;width:74px;text-align:left;top:239px;letter-spacing:-0.124px;">55</div>
<div class="c " id="cD9" style="left:325px;width:69px;text-align:left;top:239px;letter-spacing:-0.124px;">55</div>
<div class="c " id="cE9" style="left:397px;width:99px;text-align:left;top:239px;letter-spacing:-0.434px;">=SUM(B9:D9)</div>
<div class="c " id="cF9" style="left:499px;width:123px;text-align:left;top:239px;letter-spacing:-0.519px;">=RANK(E9,$E$2:$E$15)</div>
<div class="c " id="cG9" style="left:625px;width:158px;text-align:left;top:239px;letter-spacing:-0.082px;">=((E9-$E$16)/$E$17)*10+50</div>
<svg style="left:395px;top:239px" width="5" height="5"><path d="M0 0H5L0 5Z" fill="#008000"/></svg>
<div class="c " id="cA10" style="left:30px;width:62px;text-align:left;top:253px;letter-spacing:-0.547px;">9000009</div>
<div class="c " id="cB10" style="left:95px;width:150px;text-align:left;top:253px;letter-spacing:-0.124px;">84</div>
<div class="c " id="cC10" style="left:248px;width:74px;text-align:left;top:253px;letter-spacing:-0.124px;">80</div>
<div class="c " id="cD10" style="left:325px;width:69px;text-align:left;top:253px;letter-spacing:-0.124px;">85</div>
<div class="c " id="cE10" style="left:397px;width:99px;text-align:left;top:253px;letter-spacing:-0.385px;">=SUM(B10:D10)</div>
<div class="c " id="cF10" style="left:499px;width:123px;text-align:left;top:253px;letter-spacing:-0.5px;">=RANK(E10,$E$2:$E$15)</div>
<div class="c " id="cG10" style="left:625px;width:158px;text-align:left;top:253px;letter-spacing:-0.083px;">=((E10-$E$16)/$E$17)*10+50</div>
<svg style="left:395px;top:253px" width="5" height="5"><path d="M0 0H5L0 5Z" fill="#008000"/></svg>
<div class="c " id="cA11" style="left:30px;width:62px;text-align:left;top:267px;letter-spacing:-0.547px;">9000010</div>
<div class="c " id="cB11" style="left:95px;width:150px;text-align:left;top:267px;letter-spacing:-0.124px;">56</div>
<div class="c " id="cC11" style="left:248px;width:74px;text-align:left;top:267px;letter-spacing:-0.124px;">92</div>
<div class="c " id="cD11" style="left:325px;width:69px;text-align:left;top:267px;letter-spacing:-0.124px;">55</div>
<div class="c " id="cE11" style="left:397px;width:99px;text-align:left;top:267px;letter-spacing:-0.385px;">=SUM(B11:D11)</div>
<div class="c " id="cF11" style="left:499px;width:123px;text-align:left;top:267px;letter-spacing:-0.5px;">=RANK(E11,$E$2:$E$15)</div>
<div class="c " id="cG11" style="left:625px;width:158px;text-align:left;top:267px;letter-spacing:-0.083px;">=((E11-$E$16)/$E$17)*10+50</div>
<svg style="left:395px;top:267px" width="5" height="5"><path d="M0 0H5L0 5Z" fill="#008000"/></svg>
<div class="c " id="cA12" style="left:30px;width:62px;text-align:left;top:281px;letter-spacing:-0.547px;">9000011</div>
<div class="c " id="cB12" style="left:95px;width:150px;text-align:left;top:281px;letter-spacing:-0.124px;">79</div>
<div class="c " id="cC12" style="left:248px;width:74px;text-align:left;top:281px;letter-spacing:-0.124px;">63</div>
<div class="c " id="cD12" style="left:325px;width:69px;text-align:left;top:281px;letter-spacing:-0.124px;">74</div>
<div class="c " id="cE12" style="left:397px;width:99px;text-align:left;top:281px;letter-spacing:-0.385px;">=SUM(B12:D12)</div>
<div class="c " id="cF12" style="left:499px;width:123px;text-align:left;top:281px;letter-spacing:-0.5px;">=RANK(E12,$E$2:$E$15)</div>
<div class="c " id="cG12" style="left:625px;width:158px;text-align:left;top:281px;letter-spacing:-0.083px;">=((E12-$E$16)/$E$17)*10+50</div>
<svg style="left:395px;top:281px" width="5" height="5"><path d="M0 0H5L0 5Z" fill="#008000"/></svg>
<div class="c " id="cA13" style="left:30px;width:62px;text-align:left;top:295px;letter-spacing:-0.547px;">9000012</div>
<div class="c " id="cB13" style="left:95px;width:150px;text-align:left;top:295px;letter-spacing:-0.124px;">79</div>
<div class="c " id="cC13" style="left:248px;width:74px;text-align:left;top:295px;letter-spacing:-0.124px;">80</div>
<div class="c " id="cD13" style="left:325px;width:69px;text-align:left;top:295px;letter-spacing:-0.124px;">90</div>
<div class="c " id="cE13" style="left:397px;width:99px;text-align:left;top:295px;letter-spacing:-0.385px;">=SUM(B13:D13)</div>
<div class="c " id="cF13" style="left:499px;width:123px;text-align:left;top:295px;letter-spacing:-0.5px;">=RANK(E13,$E$2:$E$15)</div>
<div class="c " id="cG13" style="left:625px;width:158px;text-align:left;top:295px;letter-spacing:-0.083px;">=((E13-$E$16)/$E$17)*10+50</div>
<svg style="left:395px;top:295px" width="5" height="5"><path d="M0 0H5L0 5Z" fill="#008000"/></svg>
<div class="c " id="cA14" style="left:30px;width:62px;text-align:left;top:309px;letter-spacing:-0.547px;">9000013</div>
<div class="c " id="cB14" style="left:95px;width:150px;text-align:left;top:309px;letter-spacing:-0.124px;">76</div>
<div class="c " id="cC14" style="left:248px;width:74px;text-align:left;top:309px;letter-spacing:-0.124px;">76</div>
<div class="c " id="cD14" style="left:325px;width:69px;text-align:left;top:309px;letter-spacing:-0.124px;">87</div>
<div class="c " id="cE14" style="left:397px;width:99px;text-align:left;top:309px;letter-spacing:-0.385px;">=SUM(B14:D14)</div>
<div class="c " id="cF14" style="left:499px;width:123px;text-align:left;top:309px;letter-spacing:-0.5px;">=RANK(E14,$E$2:$E$15)</div>
<div class="c " id="cG14" style="left:625px;width:158px;text-align:left;top:309px;letter-spacing:-0.083px;">=((E14-$E$16)/$E$17)*10+50</div>
<svg style="left:395px;top:309px" width="5" height="5"><path d="M0 0H5L0 5Z" fill="#008000"/></svg>
<div class="c " id="cA15" style="left:30px;width:62px;text-align:left;top:323px;letter-spacing:-0.547px;">9000014</div>
<div class="c " id="cB15" style="left:95px;width:150px;text-align:left;top:323px;letter-spacing:-0.124px;">87</div>
<div class="c " id="cC15" style="left:248px;width:74px;text-align:left;top:323px;letter-spacing:-0.124px;">85</div>
<div class="c " id="cD15" style="left:325px;width:69px;text-align:left;top:323px;letter-spacing:-0.124px;">84</div>
<div class="c " id="cE15" style="left:397px;width:99px;text-align:left;top:323px;letter-spacing:-0.385px;">=SUM(B15:D15)</div>
<div class="c " id="cF15" style="left:499px;width:123px;text-align:left;top:323px;letter-spacing:-0.5px;">=RANK(E15,$E$2:$E$15)</div>
<div class="c " id="cG15" style="left:625px;width:158px;text-align:left;top:323px;letter-spacing:-0.083px;">=((E15-$E$16)/$E$17)*10+50</div>
<svg style="left:395px;top:323px" width="5" height="5"><path d="M0 0H5L0 5Z" fill="#008000"/></svg>
<div class="c cj" id="cA16" style="left:28px;width:62px;display:flex;justify-content:flex-end;top:337px;letter-spacing:0px"><span style="white-space:nowrap">平均値</span></div>
<div class="c cj" id="cA17" style="left:28px;width:62px;display:flex;justify-content:flex-end;top:351px;letter-spacing:0px"><span style="white-space:nowrap">標準偏差</span></div>
<div class="c cj" id="cA18" style="left:28px;width:62px;display:flex;justify-content:flex-end;top:365px;letter-spacing:0px"><span style="white-space:nowrap">最高点</span></div>
<div class="c cj" id="cA19" style="left:28px;width:62px;display:flex;justify-content:flex-end;top:379px;letter-spacing:0px"><span style="white-space:nowrap">最低点</span></div>
<div class="c cj" id="cA20" style="left:28px;width:62px;display:flex;justify-content:flex-end;top:393px;letter-spacing:0px"><span style="white-space:nowrap">80点以上の人数</span></div>
<div class="c cj" id="cA21" style="left:28px;width:62px;display:flex;justify-content:flex-end;top:407px;letter-spacing:0px"><span style="white-space:nowrap">80点以上の合計得点</span></div>
<div class="c cj" id="cA22" style="left:28px;width:62px;display:flex;justify-content:flex-end;top:421px;letter-spacing:0px"><span style="white-space:nowrap">80点以上の得点の平均</span></div>
<div class="c cj" id="cA23" style="left:28px;width:62px;display:flex;justify-content:flex-end;top:435px;letter-spacing:0px"><span style="white-space:nowrap">標本標準偏差</span></div>
<div class="c " id="cB16" style="left:95px;width:150px;text-align:left;top:337px;letter-spacing:-0.451px;">=AVERAGE(B2:B15)</div>
<div class="c " id="cC16" style="left:248px;width:74px;text-align:left;top:337px;letter-spacing:-0.451px;">=AVERAGE(C2:C15)</div>
<div class="c " id="cD16" style="left:325px;width:69px;text-align:left;top:337px;letter-spacing:-0.451px;">=AVERAGE(D2:D15)</div>
<div class="c " id="cE16" style="left:397px;width:99px;text-align:left;top:337px;letter-spacing:-0.451px;">=AVERAGE(E2:E15)</div>
<div class="c " id="cB17" style="left:95px;width:150px;text-align:left;top:351px;letter-spacing:-0.457px;">=STDEVP(B2:B15)</div>
<div class="c " id="cC17" style="left:248px;width:74px;text-align:left;top:351px;letter-spacing:-0.457px;">=STDEVP(C2:C15)</div>
<div class="c " id="cD17" style="left:325px;width:69px;text-align:left;top:351px;letter-spacing:-0.457px;">=STDEVP(D2:D15)</div>
<div class="c " id="cE17" style="left:397px;width:99px;text-align:left;top:351px;letter-spacing:-0.457px;">=STDEVP(E2:E15)</div>
<div class="c " id="cB18" style="left:95px;width:150px;text-align:left;top:365px;letter-spacing:-0.473px;">=MAX(B2:B15)</div>
<div class="c " id="cC18" style="left:248px;width:74px;text-align:left;top:365px;letter-spacing:-0.473px;">=MAX(C2:C15)</div>
<div class="c " id="cD18" style="left:325px;width:69px;text-align:left;top:365px;letter-spacing:-0.473px;">=MAX(D2:D15)</div>
<div class="c " id="cE18" style="left:397px;width:99px;text-align:left;top:365px;letter-spacing:-0.473px;">=MAX(E2:E15)</div>
<div class="c " id="cB19" style="left:95px;width:150px;text-align:left;top:379px;letter-spacing:-0.417px;">=MIN(B2:B15)</div>
<div class="c " id="cC19" style="left:248px;width:74px;text-align:left;top:379px;letter-spacing:-0.417px;">=MIN(C2:C15)</div>
<div class="c " id="cD19" style="left:325px;width:69px;text-align:left;top:379px;letter-spacing:-0.417px;">=MIN(D2:D15)</div>
<div class="c " id="cE19" style="left:397px;width:99px;text-align:left;top:379px;letter-spacing:-0.417px;">=MIN(E2:E15)</div>
<div class="c " id="cB23" style="left:95px;width:150px;text-align:left;top:435px;letter-spacing:-0.394px;">=STDEV(B2:B15)</div>
<div class="c " id="cC23" style="left:248px;width:74px;text-align:left;top:435px;letter-spacing:-0.394px;">=STDEV(C2:C15)</div>
<div class="c " id="cD23" style="left:325px;width:69px;text-align:left;top:435px;letter-spacing:-0.394px;">=STDEV(D2:D15)</div>
<div class="c " id="cB20" style="left:95px;width:150px;text-align:left;top:393px;letter-spacing:-0.247px;">=COUNTIF(B2:B15,&quot;&gt;=80&quot;)</div>
<div class="c " id="cB21" style="left:95px;width:150px;text-align:left;top:407px;letter-spacing:-0.191px;">=SUMIF(B2:B15,&quot;&gt;=80&quot;)</div>
<div class="c " id="cB22" style="left:95px;width:150px;text-align:left;top:421px;letter-spacing:0.17px;">=B21/B20</div>
<div class="c " id="cC20" style="left:248px;width:74px;text-align:left;top:393px;letter-spacing:-0.247px;">=COUNTIF(C2:C15,&quot;&gt;=80&quot;)</div>
<div class="c " id="cC21" style="left:248px;width:74px;text-align:left;top:407px;letter-spacing:-0.191px;">=SUMIF(C2:C15,&quot;&gt;=80&quot;)</div>
<div class="c " id="cC22" style="left:248px;width:74px;text-align:left;top:421px;letter-spacing:0.17px;">=C21/C20</div>
<div class="c " id="cD20" style="left:325px;width:69px;text-align:left;top:393px;letter-spacing:-0.247px;">=COUNTIF(D2:D15,&quot;&gt;=80&quot;)</div>
<div class="c " id="cD21" style="left:325px;width:69px;text-align:left;top:407px;letter-spacing:-0.191px;">=SUMIF(D2:D15,&quot;&gt;=80&quot;)</div>
<div class="c " id="cD22" style="left:325px;width:69px;text-align:left;top:421px;letter-spacing:0.17px;">=D21/D20</div>
<div class="a" style="left:28px;top:335px;width:367px;height:2px;background:#000"></div>
<div class="a" style="left:621px;top:433px;width:166px;height:17px;box-sizing:border-box;border:3px solid #000;clip-path:inset(0 4px 0 0)"></div>
<div class="a dither" style="left:784px;top:113px;width:14px;height:424px"></div><div class="a" style="left:783px;top:113px;width:1px;height:439px;background:#e8f4e8"></div><div class="btn3d" style="left:784px;top:113px;width:14px;height:5px"></div><div class="a" style="left:784px;top:118px;width:14px;height:1px;background:#000"></div><div class="btn3d" style="left:784px;top:119px;width:14px;height:16px"></div><div class="btn3d" style="left:784px;top:135px;width:14px;height:374px"></div><div class="btn3d" style="left:784px;top:523px;width:14px;height:14px"></div><svg style="left:787px;top:125px" width="7" height="4" viewBox="0 0 7 4" shape-rendering="crispEdges"><path d="M3 0h1v1h-1zM2 1h3v1h-3zM1 2h5v1h-5zM0 3h7v1h-7z" fill="#000"/></svg><svg style="left:787px;top:528px" width="7" height="4" viewBox="0 0 7 4" shape-rendering="crispEdges"><path d="M0 0h7v1h-7zM1 1h5v1h-5zM2 2h3v1h-3zM3 3h1v1h-1z" fill="#000"/></svg><div class="a" style="left:784px;top:538px;width:16px;height:14px;background:#c0dcc0"></div><div class="a" style="left:784px;top:538px;width:1px;height:14px;background:#404040"></div><div class="a" style="left:784px;top:538px;width:14px;height:1px;background:#404040"></div><div class="a" style="left:0px;top:537px;width:784px;height:15px;background:#c0dcc0"></div><div class="a" style="left:2px;top:537px;width:470px;height:1px;background:#808080"></div><div class="a dither" style="left:477px;top:537px;width:301px;height:15px"></div><div class="btn3d" style="left:472px;top:537px;width:5px;height:15px"></div><div class="btn3d" style="left:477px;top:537px;width:15px;height:15px"></div><div class="btn3d" style="left:492px;top:537px;width:203px;height:15px"></div><div class="btn3d" style="left:763px;top:537px;width:15px;height:15px"></div><div class="btn3d" style="left:778px;top:537px;width:5px;height:15px"></div><svg style="left:477px;top:537px" width="15" height="15" viewBox="0 0 15 15" shape-rendering="crispEdges"><path d="M9 3.500v7l-3.500 -3.500z" fill="#000"/></svg><svg style="left:763px;top:537px" width="15" height="15" viewBox="0 0 15 15" shape-rendering="crispEdges"><path d="M5.500 3.500v7l3.500 -3.500z" fill="#000"/></svg>
<svg style="left:2px;top:542px" width="60" height="7" viewBox="0 0 60 7" shape-rendering="crispEdges"><rect x="3" y="0" width="1" height="7" fill="#000"/><path d="M8 0h1v7h-1zM7 1h1v5h-1zM6 2h1v3h-1zM5 3h1v1h-1z" fill="#000"/><path d="M24 0h1v7h-1zM23 1h1v5h-1zM22 2h1v3h-1zM21 3h1v1h-1z" fill="#000"/><path d="M36 0h1v7h-1zM37 1h1v5h-1zM38 2h1v3h-1zM39 3h1v1h-1z" fill="#000"/><path d="M50 0h1v7h-1zM51 1h1v5h-1zM52 2h1v3h-1zM53 3h1v1h-1z" fill="#000"/><rect x="55" y="0" width="1" height="7" fill="#000"/></svg><div class="a" style="left:60px;top:538px;width:1px;height:13px;background:#808080"></div><svg style="left:62px;top:537px" width="300" height="16" viewBox="0 0 300 16"><path d="M0.500 1L7 14.500H53L56 8" fill="none" stroke="#000" stroke-width="1"/><path d="M146 14.500H234L240 1" fill="none" stroke="#000" stroke-width="1"/><path d="M234 14.500H286L292 1" fill="none" stroke="#000" stroke-width="1"/><path d="M52 0L59 14.500H146L152.500 0Z" fill="#fff" stroke="none"/><path d="M52 0.500L59 14.500H146L152.500 0.500" fill="none" stroke="#000" stroke-width="1"/></svg><div class="t" id="tab1" style="left:70px;top:538px;font-size:12.500px;">Sheet1</div><div class="t" id="tab2" style="left:124px;top:538px;font-size:12px;letter-spacing:-0.500px;-webkit-text-stroke:0.300px #000">集計に使う関数</div><div class="a" style="left:124px;top:549px;width:81px;height:1px;background:#000"></div><div class="t" id="tab3" style="left:219px;top:538px;font-size:12px;letter-spacing:0.100px">統計処理の例</div><div class="t" id="tab4" style="left:304px;top:538px;font-size:12.500px;">Sheet2</div>
<div class="a" style="left:0;top:552px;width:800px;height:21px;background:#c0dcc0"></div><div class="a" style="left:0;top:553px;width:800px;height:1px;background:#fff"></div><div class="t" id="cmd" style="left:6px;top:557px;font-size:13px;-webkit-text-stroke:0.200px #000"><span style="display:inline-block;width:37px;height:13px;vertical-align:top"><span style="display:inline-block;transform:scaleX(0.7115);transform-origin:0 0;white-space:nowrap">コマンド</span></span></div><div class="t" style="left:673px;top:558px;font-size:11px;">NUM</div>
<div class="a" style="left:0;top:573px;width:800px;height:27px;background:#c0dcc0"></div><div class="a" style="left:0;top:573px;width:800px;height:1px;background:#fff"></div><div class="tb" style="left:2px;width:65px;top:576px;height:22px"></div><svg style="left:6px;top:580px" width="17" height="15" viewBox="0 0 17 15"><path d="M0 2h1v1h-1zM2 2.500h1v1h-1zM4 3h1v1h-1zM1 4.500h1v1h-1zM3 5h1v1h-1z" fill="#e02020"/><path d="M0 8h1v1h-1zM2 8.500h1v1h-1zM4 9h1v1h-1zM1 10.500h1v1h-1zM3 11h1v1h-1z" fill="#2030e0"/><path d="M5 1.500Q8 -1 10.500 1Q13 2.500 16 0.500V13Q13 15 10.500 13.500Q8 11.500 5 14Z" fill="#101010"/><path d="M6.500 3Q8.200 1.500 10 2.800V6.300Q8.200 5 6.500 6.500Z" fill="#f02020"/><path d="M11 3.200Q12.700 4.300 14.500 3V6.500Q12.700 7.800 11 6.700Z" fill="#20d020"/><path d="M6.500 8Q8.200 6.500 10 7.800V11.300Q8.200 10 6.500 11.500Z" fill="#2040f0"/><path d="M11 8.200Q12.700 9.300 14.500 8V11.500Q12.700 12.800 11 11.700Z" fill="#f8f020"/></svg><div class="t" id="start" style="left:23px;top:580px;font-size:13px;font-weight:bold;-webkit-text-stroke:0.600px #000"><span style="display:inline-block;width:39px;height:13px;vertical-align:top"><span style="display:inline-block;transform:scaleX(0.7500);transform-origin:0 0;white-space:nowrap">スタート</span></span></div><div class="a" style="left:70px;top:577px;width:2px;height:21px;box-sizing:border-box;border-left:1px solid #808080;border-right:1px solid #fff"></div><div class="a" style="left:74px;top:578px;width:3px;height:19px;box-sizing:border-box;border-left:1px solid #fff;border-top:1px solid #fff;border-right:1px solid #808080;border-bottom:1px solid #808080"></div><div class="a" style="left:153px;top:577px;width:2px;height:21px;box-sizing:border-box;border-left:1px solid #808080;border-right:1px solid #fff"></div><div class="a" style="left:157px;top:578px;width:3px;height:19px;box-sizing:border-box;border-left:1px solid #fff;border-top:1px solid #fff;border-right:1px solid #808080;border-bottom:1px solid #808080"></div><svg style="left:84px;top:579px" width="17" height="17" viewBox="0 0 17 17"><ellipse cx="8" cy="9" rx="6.300" ry="6" fill="none" stroke="#3c90e0" stroke-width="3.200"/><rect x="4" y="8" width="10" height="2.400" fill="#3c90e0"/><rect x="10" y="10" width="6" height="3" fill="#c0dcc0"/><path d="M1 13Q-1 16 3 14.500Q10 11 15 4Q17 0 13 1.500Q11 2 9 3.500" fill="none" stroke="#60a8e8" stroke-width="1.300"/></svg><svg style="left:107px;top:579px" width="17" height="17" viewBox="0 0 17 17"><rect x="3.500" y="3.500" width="11" height="10" fill="#f4f4f4" stroke="#6080a0" stroke-width="1"/><rect x="11" y="5" width="3" height="2" fill="#e04020"/><path d="M2 7Q3 2 8 3L7 1L11.500 3.500L7.500 6.500L8 4.500Q4.500 4 4 8Z" fill="#3080d8" stroke="#2060b0" stroke-width="0.500"/><path d="M14 10Q13 15 8 14L9 16L4.500 13.500L8.500 10.500L8 12.500Q11.500 13 12 9Z" fill="#3080d8" stroke="#2060b0" stroke-width="0.500"/></svg><svg style="left:130px;top:579px" width="17" height="17" viewBox="0 0 17 17"><rect x="1" y="3" width="13" height="12.500" fill="#e8f4f4" stroke="#101010" stroke-width="1.400"/><path d="M2 4V14.500H13" fill="none" stroke="#30a0c8" stroke-width="1.600"/><rect x="5.500" y="7" width="5" height="5" fill="#fff" stroke="#303030" stroke-width="1"/><path d="M8 9.500L14 1.500L16.500 3.500L10.500 11Z" fill="#f0c040" stroke="#503010" stroke-width="0.800"/><path d="M8 9.500L8.300 12L10.500 11Z" fill="#303030"/></svg><div class="tb" style="left:164px;width:101px;top:576px;height:22px"></div><div class="tb" style="left:268px;width:100px;top:576px;height:22px"></div><div class="tb" style="left:371px;width:100px;top:576px;height:22px"></div><div class="a dither" style="left:474px;top:576px;width:100px;height:22px;box-sizing:border-box;border:1px solid;border-color:#404040 #fff #fff #404040;box-shadow:inset 1px 1px 0 #808080"></div><svg style="left:168px;top:581px" width="17" height="14" viewBox="0 0 17 14"><rect x="2.500" y="3.500" width="13" height="9" fill="#fff" stroke="#202020" stroke-width="1"/><rect x="11" y="5" width="3" height="2.500" fill="#e02020"/><path d="M4 8.500H10M4 10.500H10" stroke="#2040e0" stroke-width="1.200"/><path d="M0 1.500L5 5.500M5 1.500L0 5.500M2.500 0.500V6.500M-0.500 3.500H5.500" stroke="#20d020" stroke-width="1.200"/></svg><div class="t" id="tk1" style="left:187px;top:582px;font-size:12px;letter-spacing:-0.491px;">my own mailb...</div><svg style="left:271px;top:579px" width="17" height="17" viewBox="0 0 17 17"><path d="M3.500 0.500H11.500L14.500 3.500V15.500H3.500Z" fill="#fff" stroke="#606060" stroke-width="1"/><ellipse cx="7" cy="9" rx="4.500" ry="4.300" fill="none" stroke="#2860d0" stroke-width="2.400"/><rect x="4" y="8" width="7" height="2" fill="#2860d0"/><rect x="9" y="10" width="4" height="2.500" fill="#fff"/><path d="M1.500 12.500Q0 15 3 13.500Q9 10 12 5Q13 2.500 10 4" fill="none" stroke="#60a0e8" stroke-width="1"/></svg><div class="t" id="tk2" style="left:289px;top:580px;font-size:13px;letter-spacing:-1.569px;">応用情報処<span style="letter-spacing:0">...</span></div><svg style="left:375px;top:579px" width="17" height="17" viewBox="0 0 17 17"><path d="M2.500 3.500H7L8.500 5H14.500V14.500H2.500Z" fill="#f0d870" stroke="#806020" stroke-width="1"/><circle cx="6" cy="7.500" r="4" fill="#c0f0f8" stroke="#303030" stroke-width="1.200"/><path d="M9 10.500L14 15.500" stroke="#2050e0" stroke-width="2.400"/></svg><div class="t" id="tk3" style="left:392px;top:581px;font-size:12px;"><span style="display:inline-block;width:18px;height:12px;vertical-align:top"><span style="display:inline-block;transform:scaleX(0.7500);transform-origin:0 0;white-space:nowrap">マイ</span></span><span style="display:inline-block;width:5px"></span><span style="display:inline-block;width:51px;height:12px;vertical-align:top"><span style="display:inline-block;transform:scaleX(0.7083);transform-origin:0 0;white-space:nowrap">ドキュメント</span></span></div><svg style="left:478px;top:579px" width="17" height="17" viewBox="0 0 17 17" shape-rendering="crispEdges"><rect x="0" y="0" width="16" height="16" fill="#006000"/><rect x="1.500" y="1.500" width="13" height="13" fill="#fff"/><rect x="2.500" y="2.500" width="11" height="11" fill="#107010"/><path d="M4 4L12 12M12 4L4 12" stroke="#fff" stroke-width="2.200" shape-rendering="auto"/><path d="M9 8H13M8 9V13" stroke="#107010" stroke-width="1"/></svg><div class="t" id="tk4" style="left:496px;top:581px;font-size:12px;font-weight:bold;letter-spacing:0.204px;">Microsoft ...</div><div class="a" style="left:586px;top:577px;width:212px;height:21px;box-sizing:border-box;border:1px solid;border-color:#808080 #fff #fff #808080;"></div><svg style="left:589px;top:579px" width="17" height="17" viewBox="0 0 17 17" shape-rendering="crispEdges"><rect x="0" y="0" width="16" height="16" fill="#101020"/><rect x="0.500" y="0.500" width="15" height="15" fill="none" stroke="#3070f0" stroke-dasharray="1 1"/><path d="M5 3H11L7 7H11L5 13M9 4V8M4 9H8" fill="none" stroke="#30c0f0" stroke-width="1.500" shape-rendering="auto"/></svg><div class="a" style="left:606px;top:579px;width:16px;height:16px;background:#0a1878"></div><div class="t" style="left:609px;top:580px;font-size:10px;color:#fff;letter-spacing:-0.300px">JP</div><svg style="left:624px;top:579px" width="17" height="17" viewBox="0 0 17 17"><path d="M2 6H5L9 2.500V13.500L5 10H2Z" fill="#f0e090" stroke="#303030" stroke-width="0.800"/><path d="M11 5Q13 8 11 11" fill="none" stroke="#303030" stroke-width="1"/><circle cx="8" cy="8" r="6.800" fill="none" stroke="#e02020" stroke-width="1.600"/><path d="M3.200 12.800L12.800 3.200" stroke="#e02020" stroke-width="1.600"/></svg><svg style="left:642px;top:579px" width="17" height="17" viewBox="0 0 17 17"><path d="M5 0.500H11L15.500 5V11L11 15.500H5L0.500 11V5Z" fill="#1030d0" stroke="#081870" stroke-width="0.800"/><path d="M1.500 8H4Q5 3 6.500 8Q7.500 13 9 8Q10 3 11.500 8H14.500" fill="none" stroke="#f8e020" stroke-width="1.400"/></svg><svg style="left:660px;top:581px" width="17" height="14" viewBox="0 0 17 14"><rect x="2.500" y="3.500" width="13" height="9" fill="#fff" stroke="#202020" stroke-width="1"/><rect x="11" y="5" width="3" height="2.500" fill="#e02020"/><path d="M4 8.500H10M4 10.500H10" stroke="#2040e0" stroke-width="1.200"/><path d="M0 1.500L5 5.500M5 1.500L0 5.500M2.500 0.500V6.500M-0.500 3.500H5.500" stroke="#20d020" stroke-width="1.200"/></svg><svg style="left:679px;top:578px" width="17" height="18" viewBox="0 0 17 18"><circle cx="7" cy="7" r="6" fill="#e01828" stroke="#801010" stroke-width="0.600"/><circle cx="5" cy="4.500" r="1.800" fill="#ff9090"/><path d="M9 10L13 12V16H8Z" fill="#e8e8e8" stroke="#303030" stroke-width="0.800"/><path d="M13.500 2V12M15 1V8" stroke="#c09020" stroke-width="1"/></svg><div class="t" style="left:704px;top:577px;font-size:20px;color:#101010;transform:scaleX(0.720);transform-origin:0 0">A</div><svg style="left:717px;top:579px" width="15" height="17" viewBox="0 0 15 17"><path d="M8 3L11 6L5 11L3.500 9.500Z" fill="#909090" stroke="#303030" stroke-width="0.800"/><circle cx="10.500" cy="4" r="2.800" fill="#d0d0d0" stroke="#303030" stroke-width="0.800"/><path d="M4 10.500Q1 13 3.500 15Q6 16.500 7 13.500" fill="none" stroke="#202020" stroke-width="1"/></svg><svg style="left:733px;top:581px" width="17" height="13" viewBox="0 0 17 13" shape-rendering="crispEdges"><rect x="0.500" y="2.500" width="15" height="10" fill="#e0e0e0" stroke="#404040"/><path d="M1 1.500H5L6 0.500H10L11 1.500H15" fill="none" stroke="#404040"/><rect x="3" y="5" width="10" height="5" fill="#fff" stroke="#404040"/><rect x="4.500" y="6.500" width="2" height="2" fill="#404040"/><rect x="9.500" y="6.500" width="2" height="2" fill="#404040"/></svg><div class="t" id="clock" style="left:761px;top:581px;font-size:12px;letter-spacing:-0.606px;">15:52</div>
<svg style="left:640px;top:24px" width="104" height="78" viewBox="0 0 800 600">
<defs>
<linearGradient id="dg1" x1="0.050" y1="0.200" x2="0.900" y2="0.800"><stop offset="0" stop-color="#08a4d8"/><stop offset="0.350" stop-color="#0898d4"/><stop offset="0.600" stop-color="#0470c8"/><stop offset="1" stop-color="#0058c0"/></linearGradient>
<linearGradient id="dg2" x1="0" y1="0" x2="0.300" y2="1"><stop offset="0" stop-color="#e0e0e8"/><stop offset="0.450" stop-color="#c4c4cc"/><stop offset="1" stop-color="#9c9ca8"/></linearGradient>
<linearGradient id="dg3" x1="0" y1="0" x2="1" y2="1"><stop offset="0" stop-color="#0c98d4"/><stop offset="1" stop-color="#0468c4"/></linearGradient>
</defs>
<!-- belly -->
<path d="M60 232Q100 285 175 330Q240 362 310 373Q380 380 425 370L395 340L345 312L290 288L230 272L160 262L100 250Z" fill="url(#dg2)"/>
<path d="M440 345Q510 340 565 395Q600 440 610 490L592 472Q570 420 520 395Q480 378 452 375Z" fill="#b0b0bc"/>
<!-- tail flukes -->
<path d="M598 470Q640 495 700 497Q745 508 758 548Q762 584 718 582Q665 570 622 522Q600 547 560 555Q515 558 497 532Q497 498 540 487Q580 484 600 494Z" fill="url(#dg3)"/>
<!-- main body -->
<path d="M40 193Q60 180 100 172Q140 166 158 152Q180 112 250 95Q300 90 337 100Q375 57 443 38Q452 70 443 108Q500 150 548 205Q588 270 602 345Q612 430 626 492L600 500Q592 440 545 392Q500 358 445 347Q465 395 483 438Q430 392 395 340Q360 305 300 288Q230 272 150 262Q100 255 62 230Q40 212 40 193Z" fill="url(#dg1)"/>
<!-- lighter head highlight -->
<path d="M60 188Q100 176 150 166Q185 118 250 104Q300 98 330 110Q310 150 255 192Q200 215 120 210Z" fill="#10a8d8" opacity="0.600"/>
<path d="M238 152Q258 135 285 150Q265 160 250 188Q238 170 238 152Z" fill="#40e0e8" opacity="0.850"/>
<!-- mouth -->
<path d="M42 204Q130 216 228 214" fill="none" stroke="#9060b0" stroke-width="6"/>
<!-- eye -->
<circle cx="300" cy="210" r="35" fill="#2098c8"/>
<circle cx="300" cy="210" r="29" fill="#101018"/>
<circle cx="290" cy="197" r="8" fill="#e8e8f0"/>
<!-- small fin -->
<path d="M183 333Q165 372 196 402Q228 398 240 366Q225 346 205 340Z" fill="#b8b8c4"/>
<path d="M183 333Q165 372 196 402" fill="none" stroke="#3090c8" stroke-width="9"/>
</svg>
</body></html>
